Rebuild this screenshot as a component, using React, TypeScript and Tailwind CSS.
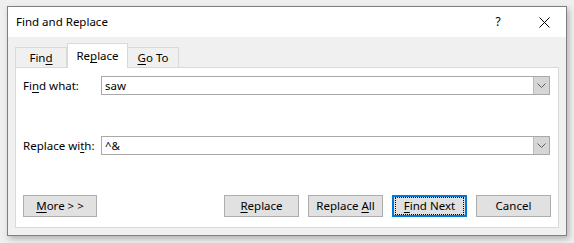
import React from 'react';

// Find and Replace dialog (Word), Windows 10 look
const font = "font-['Segoe_UI','Noto_Sans','Liberation_Sans',sans-serif]";

const Chevron: React.FC = () => (
    <svg width="9" height="6" viewBox="0 0 9 6" className="text-[#606060]">
        <path d="M0.5 0.5 L4.5 4.5 L8.5 0.5" fill="none" stroke="currentColor" strokeWidth="1" />
    </svg>
);

const ComboBox: React.FC<{ value: string }> = ({ value }) => (
    <div className="flex-1 h-[19px] border border-[#a9a9a9] bg-white flex items-center">
        <span className="flex-1 pl-[3px] leading-none text-black">{value}</span>
        <div className="w-[16px] h-[17px] bg-[#d6d6d6] border-l border-[#bcbcbc] flex items-center justify-center">
            <Chevron />
        </div>
    </div>
);

interface ButtonProps {
    children: React.ReactNode;
    focused?: boolean;
    width?: string;
}

const DlgButton: React.FC<ButtonProps> = ({ children, focused, width = 'w-[75px]' }) => (
    <div
        className={`${width} h-[22px] flex items-center justify-center text-black bg-[#e1e1e1] ${
            focused ? 'border-2 border-[#0078d7]' : 'border border-[#adadad]'
        }`}
    >
        {focused ? (
            <span className="w-full h-full border border-dotted border-black flex items-center justify-center m-[1px]">
                {children}
            </span>
        ) : (
            children
        )}
    </div>
);

const U: React.FC<{ children: React.ReactNode }> = ({ children }) => (
    <span className="underline underline-offset-2">{children}</span>
);

const App: React.FC = () => {
    return (
        <div className={`w-[574px] h-[243px] bg-[#efefef] pt-[6px] pl-[7px] text-[11.5px] ${font}`}>
            <div className="w-[560px] h-[230px] border border-[#7f7f7f] bg-[#f0f0f0] flex flex-col shadow-[2px_3px_6px_rgba(0,0,0,0.25)]">
                {/* Заголовок окна */}
                <div className="h-[30px] bg-white flex items-center pl-[8px] text-[12px] text-black">
                    <span className="flex-1 text-[11.5px]">Find and Replace</span>
                    <span className="w-[10px] mr-[36px] text-center">?</span>
                    <svg width="11" height="11" viewBox="0 0 11 11" className="mr-[16px]">
                        <path d="M0.5 0.5 L10.5 10.5 M10.5 0.5 L0.5 10.5" stroke="#000" strokeWidth="1" />
                    </svg>
                </div>

                {/* Вкладки */}
                <div className="flex-1 flex flex-col px-[7px] pt-[6px] pb-[7px]">
                    <div className="flex items-end h-[24px] text-black">
                        <div className="w-[52px] h-[20px] border border-b-0 border-[#d9d9d9] bg-[#f0f0f0] flex items-center justify-center">
                            Fin<U>d</U>
                        </div>
                        <div className="w-[61px] h-[25px] -mb-[1px] border border-b-0 border-[#d9d9d9] bg-white flex items-center justify-center relative z-10">
                            Re<U>p</U>lace
                        </div>
                        <div className="w-[51px] h-[20px] border border-b-0 border-l-0 border-[#d9d9d9] bg-[#f0f0f0] flex items-center justify-center">
                            <U>G</U>o To
                        </div>
                    </div>

                    {/* Панель вкладки Replace */}
                    <div className="flex-1 bg-white border border-[#d9d9d9] flex flex-col pl-[7px] pr-[7px] pt-[8px] pb-[10px] text-black">
                        <div className="flex items-center pr-[1px]">
                            <span className="w-[78px]">Fi<U>n</U>d what:</span>
                            <ComboBox value="saw" />
                        </div>
                        <div className="flex items-center pr-[1px] mt-[41px]">
                            <span className="w-[78px]">Replace wi<U>t</U>h:</span>
                            <ComboBox value="^&" />
                        </div>
                        <div className="flex-1" />
                        <div className="flex items-center">
                            <DlgButton width="w-[74px]">
                                <span><U>M</U>ore &gt; &gt;</span>
                            </DlgButton>
                            <div className="flex-1" />
                            <div className="flex gap-[9px]">
                                <DlgButton>
                                    <span><U>R</U>eplace</span>
                                </DlgButton>
                                <DlgButton>
                                    <span>Replace <U>A</U>ll</span>
                                </DlgButton>
                                <DlgButton focused>
                                    <span><U>F</U>ind Next</span>
                                </DlgButton>
                                <DlgButton>
                                    <span>Cancel</span>
                                </DlgButton>
                            </div>
                        </div>
                    </div>
                </div>
            </div>
        </div>
    );
};

export default App;
